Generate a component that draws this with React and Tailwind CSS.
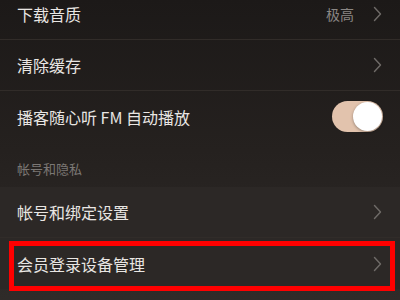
import React from "react";

const Chevron = ({ className = "" }) => (
  <svg width="9" height="16" viewBox="0 0 9 16" className={className} fill="none">
    <path d="M1.5 1.5 L7.5 8 L1.5 14.5" stroke="currentColor" strokeWidth="1.4" strokeLinecap="round" strokeLinejoin="round" />
  </svg>
);

const Row = ({ label, value, toggle, divider, children }) => (
  <div className={`relative flex h-[51px] items-center pl-[17px] pr-[17px] ${divider ? "border-b border-[#312c29]" : ""}`}>
    <span className="flex-1 text-[16px] text-[#e9e6e3]">{label}</span>
    {value && <span className="mr-[19px] text-[14px] text-[#8b8784]">{value}</span>}
    {toggle ? (
      <div className="flex h-[31px] w-[51px] items-center justify-end rounded-full bg-[#e2c3ad] p-[1px]">
        <div className="h-[29px] w-[29px] rounded-full bg-white shadow-[0_1px_3px_rgba(0,0,0,0.35)]" />
      </div>
    ) : (
      <Chevron className="mr-[1px] text-[#6f6b68]" />
    )}
    {children}
  </div>
);

export default function App() {
  return (
    <div
      className="h-[300px] w-[400px] overflow-hidden bg-gradient-to-b from-[#1c1918] via-[#25211f] to-[#2f2b29]"
      style={{ fontFamily: '"Noto Sans CJK SC", "Noto Sans", sans-serif' }}
    >
      <div className="-mt-[11px]">
        <Row label="下载音质" value="极高" divider />
        <Row label="清除缓存" divider />
        <Row label="播客随心听 FM 自动播放" toggle />
        <div className="flex h-[45px] items-end pb-[9px] pl-[17px] text-[13px] text-[#7b7774]">帐号和隐私</div>
        <div className="bg-[#2c2826]">
          <Row label="帐号和绑定设置" divider />
          <Row label="会员登录设备管理">
            <div className="pointer-events-none absolute left-[9px] right-[5px] top-[3px] bottom-[-2px] border-[5px] border-[#ff0000]" />
          </Row>
        </div>
      </div>
    </div>
  );
}
